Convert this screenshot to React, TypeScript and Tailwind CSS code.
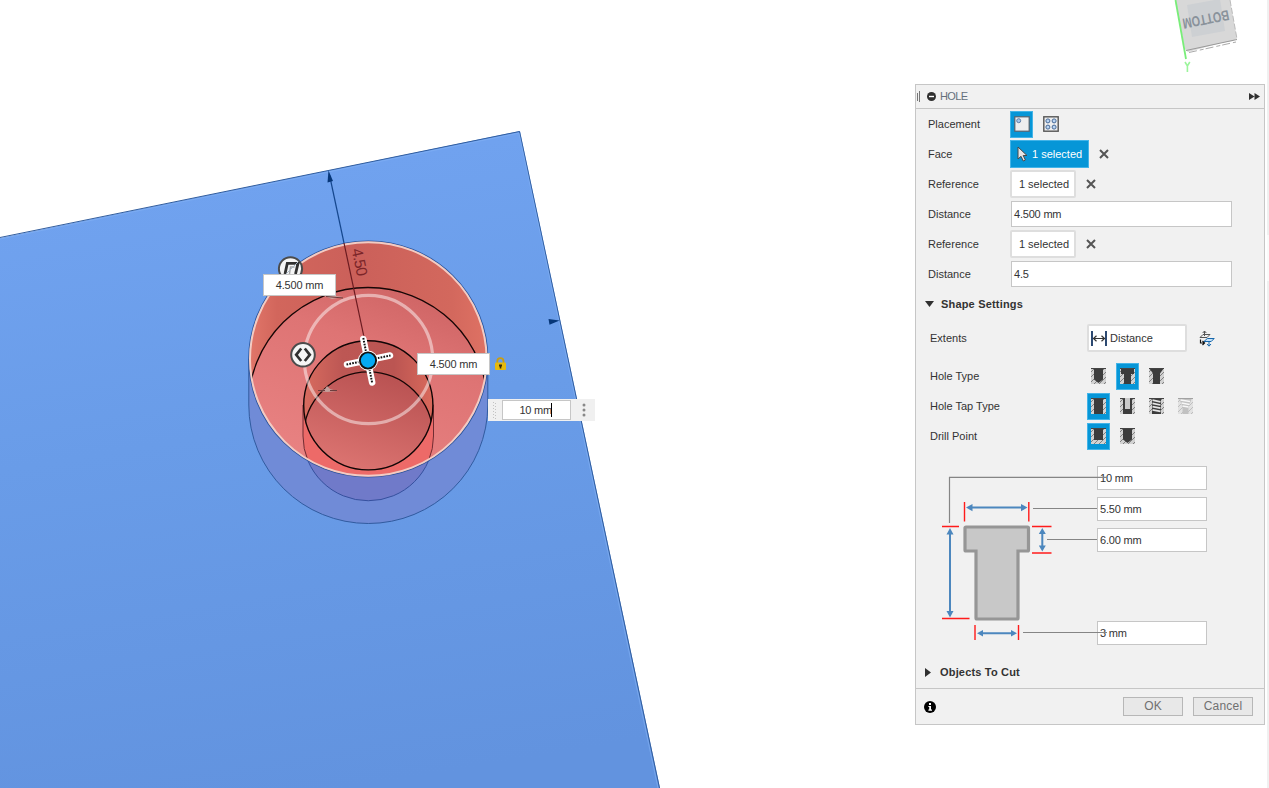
import type { ReactNode } from "react";

type HoleKind = "simple" | "counterbore" | "countersink" | "through" | "clearance" | "tapped" | "taper" | "flat";

const CAVITY: Record<string, string> = {
  simple: "M3 0H12V11.5L7.5 15L3 11.5Z",
  counterbore: "M1 0H14V6H11V16H4V6H1Z",
  countersink: "M0 0H15L11 5.5V16H4V5.5Z",
  through: "M3 0H12V16H3Z",
  clearance: "M3 0H12V16H3Z",
  tapped: "M3 0H12V16H3Z",
  taper: "M1 0H14L10.5 9V16H4.5V9Z",
  flat: "M3 0H12V12H3Z",
};

function HoleIcon({ kind }: { kind: HoleKind }) {
  const faded = kind === "taper";
  return (
    <svg width="15" height="16" viewBox="0 0 15 16" fill="none" opacity={faded ? 0.45 : 1}>
      <rect width="15" height="16" fill="#d2d2d2" />
      <path d="M0 4L4 0M0 9L9 0M0 14L14 0M3 16L15 4M8 16L15 9M13 16L15 14" stroke="#777" strokeWidth=".9" />
      <path d={CAVITY[kind]} fill={faded ? "#888" : "#3c3c3c"} />
      <path d="M0 .5H15" stroke="#444" strokeWidth="1" />
      {kind === "clearance" && <path d="M5 0H10V11H5Z" fill="#cacaca" />}
      {kind === "tapped" && (
        <path d="M3.5 2.2L11.5 3.8M3.5 5.4L11.5 7M3.5 8.6L11.5 10.2M3.5 11.8L11.5 13.4" stroke="#e6e6e6" strokeWidth="1.7" />
      )}
      {faded && <path d="M2.5 2L12 3.5M3.5 5L11.5 6.5M4.5 8L10.5 9" stroke="#fff" strokeWidth="1.5" />}
    </svg>
  );
}

function Toggle({ active, children }: { active?: boolean; children: ReactNode }) {
  return (
    <button
      className={
        active
          ? "flex h-[27px] w-[23px] items-center justify-center border border-[#43b4e8] bg-[#0696d7]"
          : "flex h-[27px] w-[23px] items-center justify-center"
      }
    >
      {children}
    </button>
  );
}

function Row({ label, children }: { label: string; children: ReactNode }) {
  return (
    <div className="flex h-[30px] items-center">
      <span className="w-[95px] pl-3">{label}</span>
      <div className="flex items-center">{children}</div>
    </div>
  );
}

function Clear({ className }: { className: string }) {
  return (
    <svg className={className} width="10" height="10" viewBox="0 0 10 10">
      <path d="M1 1L9 9M9 1L1 9" stroke="#555" strokeWidth="2" />
    </svg>
  );
}

function Selection() {
  return (
    <>
      <div className="-ml-px flex h-[28px] w-[66px] items-center justify-center rounded-[2px] border-2 border-[#dedede] bg-white pl-[2px]">
        1 selected
      </div>
      <Clear className="ml-[10px]" />
    </>
  );
}

function Field({ value }: { value: string }) {
  return (
    <div className="flex h-[26px] w-[221px] items-center border border-[#c6c6c6] bg-white pl-[2px] tracking-[-0.2px]">
      {value}
    </div>
  );
}

function OptionRow({ label, kinds, selected }: { label: string; kinds: HoleKind[]; selected: number }) {
  return (
    <div className="flex h-[30px] items-center">
      <span className="w-[157px]">{label}</span>
      <div className="flex gap-[6px]">
        {kinds.map((kind, i) => (
          <Toggle key={i} active={i === selected}>
            <HoleIcon kind={kind} />
          </Toggle>
        ))}
      </div>
    </div>
  );
}

function Scene() {
  return (
    <svg className="absolute inset-0" width="1269" height="788" viewBox="0 0 1269 788" fill="none">
      <defs>
        <linearGradient id="block" x1="250" y1="180" x2="350" y2="788" gradientUnits="userSpaceOnUse">
          <stop stopColor="#70a2ef" />
          <stop offset=".4" stopColor="#699ce8" />
          <stop offset="1" stopColor="#6293df" />
        </linearGradient>
        <linearGradient id="wall" x1="248" y1="0" x2="488" y2="0" gradientUnits="userSpaceOnUse">
          <stop stopColor="#e2776a" />
          <stop offset=".12" stopColor="#d2665c" />
          <stop offset=".45" stopColor="#cb605a" />
          <stop offset=".85" stopColor="#d3685d" />
          <stop offset="1" stopColor="#df7264" />
        </linearGradient>
        <linearGradient id="floor" x1="390" y1="287" x2="320" y2="477" gradientUnits="userSpaceOnUse">
          <stop stopColor="#d06666" />
          <stop offset=".3" stopColor="#de7474" />
          <stop offset="1" stopColor="#e98383" />
        </linearGradient>
        <linearGradient id="bore" x1="303" y1="0" x2="433" y2="0" gradientUnits="userSpaceOnUse">
          <stop stopColor="#d96c5f" />
          <stop offset=".3" stopColor="#bd5754" />
          <stop offset=".7" stopColor="#bb5552" />
          <stop offset="1" stopColor="#d9695b" />
        </linearGradient>
        <linearGradient id="boreFloor" x1="380" y1="372" x2="350" y2="470" gradientUnits="userSpaceOnUse">
          <stop stopColor="#b95252" />
          <stop offset="1" stopColor="#dc7471" />
        </linearGradient>
        <clipPath id="mouth"><ellipse cx="368.3" cy="359" rx="119.5" ry="118" /></clipPath>
        <clipPath id="boreClip"><circle cx="368.3" cy="405.5" r="65" /></clipPath>
      </defs>

      <path d="M0 238L520 131L660 788H0Z" fill="url(#block)" />
      <path d="M0 237.5L519.5 131.5L659.5 788" stroke="#315d9d" strokeWidth="1" />
      <path d="M0 239L519 133L658 788" stroke="#84b2f5" strokeWidth="1" opacity=".6" />

      <path d="M248.8 359V405A119.5 118.5 0 0 0 487.8 405V359Z" fill="#708bd7" stroke="#315b9f" />
      <path d="M303 405V436A65 64.5 0 0 0 433.5 436V405Z" fill="#707ac9" stroke="#35509e" />

      <g clipPath="url(#mouth)">
        <rect x="245" y="238" width="246" height="242" fill="url(#wall)" />
        <ellipse cx="368" cy="405.5" rx="119.5" ry="118" fill="url(#floor)" stroke="#170606" strokeWidth="1.3" />
        <path d="M303 405V436A65 64.5 0 0 0 433.5 436V405Z" fill="#ed6a68" stroke="#702d33" />
        <circle cx="368.3" cy="405.5" r="65" fill="url(#bore)" />
        <g clipPath="url(#boreClip)">
          <circle cx="368.3" cy="436.5" r="64.6" fill="url(#boreFloor)" stroke="#170606" strokeWidth="1.3" />
        </g>
        <circle cx="368.3" cy="405.3" r="64.6" stroke="#100505" strokeWidth="1.4" />
      </g>
      <ellipse cx="368.3" cy="359" rx="119.5" ry="118" stroke="#28569f" strokeWidth="1.2" />
      <ellipse cx="368.3" cy="359" rx="118.3" ry="116.8" stroke="#f2ccc4" strokeWidth="2" />
      <circle cx="368.5" cy="359.5" r="64.2" stroke="#ffffff" strokeOpacity=".48" strokeWidth="3.2" />

      <path d="M329.5 175L344 243" stroke="#15478e" strokeWidth="1.2" />
      <path d="M344 243L364 337" stroke="#6b1b20" strokeWidth="1.2" />
      <path d="M328.5 170.5L333 181L327.5 182.5Z" fill="#063678" />
      <path d="M559.5 320.5L548.5 319L549.5 324.8Z" fill="#063678" />
      <text transform="translate(351.5 249.5) rotate(78)" fontFamily="Liberation Sans" fontSize="15.5" textLength="28" fill="#7b2529">4.50</text>

      <path d="M322 295L333 294L336 296L343 297L332 299Z" fill="#cda5a1" />
      <path d="M326 296.5L343 298" stroke="#6a3838" />
      <path d="M319 391L325 389L327 386L330 389L337 391L327 392Z" fill="#c4a09c" />
      <path d="M318 390.5H325M330 390.5H337" stroke="#6c3e3e" />

      <g>
        <circle cx="290.5" cy="268.8" r="11.6" fill="#f5f5f5" stroke="#4b4b4b" strokeWidth="2" />
        <path d="M285 274L287.3 263.3H298L295.5 274" stroke="#303030" strokeWidth="2.8" />
        <path d="M289.5 274L290.5 267H294.5" stroke="#a5a5a5" strokeWidth="1.4" />
        <path d="M283 277L298 262" stroke="#a7b8c8" strokeWidth="1" />
      </g>
      <g>
        <circle cx="303" cy="354.8" r="11.8" fill="#f5f5f5" stroke="#4b4b4b" strokeWidth="2" />
        <path d="M301.2 348.5L296.2 354.8L301.2 361M304.8 348.5L309.8 354.8L304.8 361" stroke="#303030" strokeWidth="2.7" />
      </g>

      <path d="M363.3 339L372.2 382.5M347 364.5L390 355.5" stroke="#fff" strokeWidth="6.5" strokeLinecap="round" />
      <path d="M363.3 338L372.2 383M346.5 364.5L390.5 355.5" stroke="#111" strokeWidth="2" strokeDasharray="1.7 1.2" />
      <circle cx="368" cy="360.5" r="10" fill="#fff" />
      <circle cx="368" cy="360.5" r="8.1" fill="#03a9f4" stroke="#111" strokeWidth="1.9" />

      <path d="M497.3 363.5V361.2A3.1 3.1 0 0 1 503.5 361.2V363.5" stroke="#c99d13" strokeWidth="1.8" />
      <rect x="495" y="362.5" width="11" height="7.5" rx="1" fill="#e6b90e" />
      <path d="M499 364.5H502V366.5H501.3V368.5H499.7V366.5H499Z" fill="#3b2d05" />

      <path d="M1175 0H1230L1237 38.5L1233 41L1221 43L1188 52L1185 49Z" fill="#d8d8d8" />
      <path d="M1187 5L1220 -1L1225 31L1192 37Z" fill="#cdd0d3" />
      <path d="M1186 50.5L1237 39.5" stroke="#999" />
      <path d="M1189 52.5L1236 42" stroke="#aaa" strokeDasharray="8 3 4 2" />
      <path d="M1230 0L1237 39" stroke="#bbb" strokeDasharray="6 2" />
      <path d="M1175.5 0L1186 59" stroke="#79ed79" strokeWidth="1.8" />
      <path d="M1185 62L1187.4 66L1189.8 62M1187.4 66V72" stroke="#9cf59c" strokeWidth="1.6" />
      <text transform="translate(1228 10) rotate(169)" fontFamily="Liberation Sans" fontWeight="700" fontSize="14.5" textLength="47" lengthAdjust="spacingAndGlyphs" fill="#89929b">BOTTOM</text>
      <path d="M1267 0H1269V788H1267Z" fill="#f0f0f0" />
      <path d="M1267 235H1269V281H1267Z" fill="#fafafa" />
    </svg>
  );
}

function Dimensions() {
  return (
    <svg className="h-[200px] w-[200px]" viewBox="910 460 200 200" fill="none">
      <path d="M976 551H966Q965 551 965 550V528Q965 527 966 527H1027.5Q1028.5 527 1028.5 528V550Q1028.5 551 1027.5 551H1018V618Q1018 619 1017 619H977Q976 619 976 618Z" fill="#c8c8c8" stroke="#969696" strokeWidth="3.2" />
      <path d="M949.5 523V477.3H1107M1033 508.5H1097M1047 539.5H1097M1023 632.5H1107" stroke="#858585" strokeWidth="1.2" />
      <path d="M964.5 502V521.5M1028.8 502V521.5M942 526.5H959M942 618.5H969.5M1032 526.5H1051.5M1032 553H1051.5M975 625V640M1018.5 625V640" stroke="#ff1b1b" strokeWidth="1.4" />
      <path d="M969 507.6H1025M950 531V615M1042.3 532V548M980 633.3H1014" stroke="#4c87be" strokeWidth="2" />
      <path d="M966 507.6L972.5 504V511.2ZM1027.5 507.6L1021 504V511.2ZM950 528L946.5 534.5H953.5ZM950 617.5L946.5 611H953.5ZM1042.3 528L1038.8 534H1045.8ZM1042.3 551.5L1038.8 545.5H1045.8ZM977 633.3L983 630V636.6ZM1017 633.3L1011 630V636.6Z" fill="#4c87be" />
    </svg>
  );
}

function SizeField({ value }: { value: string }) {
  return (
    <div className="flex h-[24px] w-[110px] items-center border border-[#c6c6c6] bg-white pl-[2px] tracking-[-0.2px]">
      {value}
    </div>
  );
}

function HolePanel() {
  return (
    <aside className="absolute left-[915px] top-[84px] flex h-[641px] w-[350px] flex-col border border-[#c6c6c6] bg-[#f1f1f1]">
      <header className="flex h-[24px] shrink-0 items-center border-b border-[#c6c6c6] text-[#65707c]">
        <div className="ml-[1px] h-[8px] w-px bg-[#777]" />
        <div className="ml-[1px] h-[11px] w-px bg-[#777]" />
        <svg className="ml-[7px]" width="9" height="9" viewBox="0 0 9 9">
          <circle cx="4.5" cy="4.5" r="4.5" fill="#303030" />
          <path d="M2 4.5H7" stroke="#fff" strokeWidth="1.4" />
        </svg>
        <span className="ml-[4px] tracking-[-0.6px]">HOLE</span>
        <svg className="ml-auto mr-[4px]" width="11" height="7" viewBox="0 0 11 7" fill="#303030">
          <path d="M0 0L5.5 3.5L0 7ZM5.5 0L11 3.5L5.5 7Z" />
        </svg>
      </header>

      <section className="flex flex-col">
        <Row label="Placement">
          <div className="-ml-px flex gap-[6px]">
            <Toggle active>
              <svg width="16" height="16" viewBox="0 0 16 16">
                <rect x=".8" y=".8" width="14.4" height="14.4" fill="#eeeeef" stroke="#54606c" strokeWidth="1.2" />
                <circle cx="4.7" cy="4.7" r="2" fill="#a6c6ec" stroke="#5c7da9" />
              </svg>
            </Toggle>
            <Toggle>
              <svg width="16" height="16" viewBox="0 0 16 16">
                <rect x=".8" y=".8" width="14.4" height="14.4" fill="#eee" stroke="#555" strokeWidth="1.4" />
                <g fill="#bad5f3" stroke="#466896">
                  <circle cx="4.9" cy="4.9" r="2" />
                  <circle cx="11.1" cy="4.9" r="2" />
                  <circle cx="4.9" cy="11.1" r="2" />
                  <circle cx="11.1" cy="11.1" r="2" />
                </g>
              </svg>
            </Toggle>
          </div>
        </Row>
        <Row label="Face">
          <div className="-ml-px flex h-[28px] w-[79px] items-center border border-[#43b4e8] bg-[#0696d7] pl-[6px] text-white">
            <svg width="11" height="16" viewBox="0 0 11 16">
              <path d="M1 1V13L4 10.3L6.3 15L8.4 14L6.2 9.5H10Z" fill="#e5e5e5" stroke="#484848" strokeWidth="1" />
            </svg>
            <span className="ml-[4px]">1 selected</span>
          </div>
          <Clear className="ml-[10px]" />
        </Row>
        <Row label="Reference"><Selection /></Row>
        <Row label="Distance"><Field value="4.500 mm" /></Row>
        <Row label="Reference"><Selection /></Row>
        <Row label="Distance"><Field value="4.5" /></Row>
      </section>

      <h2 className="flex h-[30px] items-center pl-[9px] font-bold tracking-[0.18px]">
        <svg width="9" height="6" viewBox="0 0 9 6"><path d="M0 0H9L4.5 6Z" fill="#303030" /></svg>
        <span className="ml-[7px]">Shape Settings</span>
      </h2>

      <section className="flex flex-col pl-[14px]">
        <div className="flex h-[42px] items-center pb-[4px]">
          <span className="w-[157px]">Extents</span>
          <div className="flex h-[28px] w-[100px] items-center rounded-[2px] border-2 border-[#dedede] bg-white pl-[2px]">
            <svg width="16" height="15" viewBox="0 0 16 15" fill="none">
              <path d="M1 0V15M15 0V15" stroke="#173763" strokeWidth="1.8" />
              <path d="M2.5 7.5H13.5M5.5 4.8L2.5 7.5L5.5 10.2M10.5 4.8L13.5 7.5L10.5 10.2" stroke="#333" strokeWidth="1.2" />
            </svg>
            <span className="ml-[3px]">Distance</span>
          </div>
          <svg className="ml-[12px]" width="16" height="17" viewBox="0 0 16 17" fill="none">
            <path d="M1 7.5L4 4.5H11L8 7.5ZM5.5 6V1M3.7 3L5.5 1L7.3 3" stroke="#555" />
            <path d="M1.5 9.5V13H5M3.5 11L5.5 13L3.5 15" stroke="#111" strokeWidth="1.2" />
            <path d="M5 11.5L8.3 8.5H15.2L12.2 11.5Z" fill="#c4e1f8" stroke="#1767ac" />
            <path d="M10 11.5V16M8 14L10 16.2L12 14" stroke="#1767ac" />
          </svg>
        </div>
        <OptionRow label="Hole Type" kinds={["simple", "counterbore", "countersink"]} selected={1} />
        <OptionRow label="Hole Tap Type" kinds={["through", "clearance", "tapped", "taper"]} selected={0} />
        <OptionRow label="Drill Point" kinds={["flat", "simple"]} selected={0} />
      </section>

      <section className="relative -ml-[6px] flex h-[206px] w-[330px] flex-col pl-[187px] pt-[15px]">
        <div className="flex flex-col gap-[7px]">
          <SizeField value="10 mm" />
          <SizeField value="5.50 mm" />
          <SizeField value="6.00 mm" />
        </div>
        <div className="mt-[69px]"><SizeField value="3 mm" /></div>
        <div className="absolute left-0 top-[9px]"><Dimensions /></div>
      </section>

      <h2 className="flex h-[30px] items-center pl-[9px] font-bold tracking-[0.18px]">
        <svg width="6" height="9" viewBox="0 0 6 9"><path d="M0 0L6 4.5L0 9Z" fill="#303030" /></svg>
        <span className="ml-[9px]">Objects To Cut</span>
      </h2>

      <footer className="mt-auto flex h-[36px] items-center border-t border-[#c6c6c6] pl-[8px] pr-[11px] text-[12px] text-[#707070]">
        <svg width="12" height="12" viewBox="0 0 12 12">
          <circle cx="6" cy="6" r="6" fill="#000" />
          <path d="M5 2H7V4H5ZM4.4 5H7V8.5H8V9.8H4.4V8.5H5.2V6.1H4.4Z" fill="#fff" />
        </svg>
        <button className="ml-auto h-[19px] w-[60px] border border-[#b7b7b7] bg-[#e8e8e8] leading-[17px]">OK</button>
        <button className="ml-[10px] h-[19px] w-[60px] border border-[#b7b7b7] bg-[#e8e8e8] leading-[17px] tracking-[0.2px]">Cancel</button>
      </footer>
    </aside>
  );
}

export default function App() {
  return (
    <main className="relative h-[788px] w-[1269px] overflow-hidden bg-white font-['Liberation_Sans',sans-serif] text-[11px] leading-none text-[#333]">
      <Scene />
      <div className="absolute left-[263px] top-[274px] flex h-[22px] w-[73px] items-center justify-center border border-[#c6c6c6] bg-white tracking-[-0.2px]">4.500 mm</div>
      <div className="absolute left-[417px] top-[353px] flex h-[22px] w-[73px] items-center justify-center border border-[#c6c6c6] bg-white tracking-[-0.2px]">4.500 mm</div>
      <div className="absolute left-[488px] top-[399px] flex h-[22px] w-[107px] items-center bg-[#f0f0f0]">
        <svg width="14" height="22" viewBox="0 0 14 22"><path d="M5.5 3V20M7.5 4V20" stroke="#c3c3c3" strokeDasharray="1 2" /></svg>
        <div className="flex h-[20px] w-[69px] items-center justify-end border border-[#c6c6c6] bg-white pr-[18px] tracking-[-0.2px]">
          10 mm<span className="-ml-px h-[14px] w-px bg-black" />
        </div>
        <svg className="ml-[11px]" width="4" height="14" viewBox="0 0 4 14" fill="#888">
          <circle cx="2" cy="2" r="1.5" />
          <circle cx="2" cy="7" r="1.5" />
          <circle cx="2" cy="12" r="1.5" />
        </svg>
      </div>
      <HolePanel />
    </main>
  );
}
